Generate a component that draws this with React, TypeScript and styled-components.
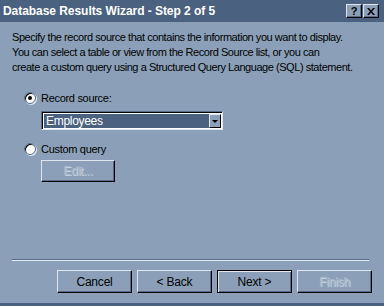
import styled, { createGlobalStyle, css } from 'styled-components';

const GlobalStyle = createGlobalStyle`
    html, body {
        margin: 0;
        padding: 0;
        background: #8ba0b8;
    }
    * {
        box-sizing: border-box;
    }
`;

const Window = styled.div`
    width: 384px;
    height: 306px;
    display: flex;
    flex-direction: column;
    background: #8ba0b8;
    border-bottom: 3px solid #4b6180;
    font-family: "Liberation Sans", Arial, sans-serif;
    font-size: 11px;
    color: #000;
`;

const TitleBar = styled.div`
    height: 22px;
    display: flex;
    align-items: center;
    justify-content: space-between;
    background: #4b6180;
    padding: 0 5px 0 3px;
`;

const Title = styled.span`
    color: #fff;
    font-weight: bold;
    font-size: 12px;
    letter-spacing: -0.05px;
`;

const Caps = styled.div`
    display: flex;
    gap: 1px;
`;

const CapButton = styled.div`
    width: 16px;
    height: 14px;
    display: flex;
    align-items: center;
    justify-content: center;
    background: #8ba0b8;
    border-top: 1px solid #dfe6ef;
    border-left: 1px solid #dfe6ef;
    border-right: 1px solid #000;
    border-bottom: 1px solid #000;
    box-shadow: inset -1px -1px 0 #566c88;
    font-weight: bold;
    font-size: 11px;
    line-height: 1;
`;

const Content = styled.div`
    flex: 1;
    padding: 8px 12px 0 12px;
`;

const Intro = styled.p`
    margin: 0;
    line-height: 15px;
    letter-spacing: -0.45px;
    white-space: nowrap;
`;

const Options = styled.div`
    margin-top: 15px;
    padding-left: 29px;
`;

const OptionRow = styled.label<{ $top?: number }>`
    display: flex;
    align-items: center;
    gap: 5px;
    height: 15px;
    margin-left: -17px;
    margin-top: ${p => p.$top ?? 0}px;
    letter-spacing: -0.3px;
`;

const Radio = styled.span<{ $checked?: boolean }>`
    width: 12px;
    height: 12px;
    border-radius: 50%;
    background: #fff;
    border: 1px solid #566c88;
    box-shadow: inset 1px 1px 0 #000, 1px 1px 0 #dfe6ef;
    display: flex;
    align-items: center;
    justify-content: center;
    &::after {
        content: '';
        width: 4px;
        height: 4px;
        border-radius: 50%;
        background: #000;
        display: ${p => (p.$checked ? 'block' : 'none')};
    }
`;

const Select = styled.div`
    margin-top: 6px;
    width: 182px;
    height: 19px;
    display: flex;
    border-top: 1px solid #566c88;
    border-left: 1px solid #566c88;
    border-right: 1px solid #dfe6ef;
    border-bottom: 1px solid #dfe6ef;
    box-shadow: inset 1px 1px 0 #000;
    padding: 2px 1px 1px 2px;
    background: #fff;
`;

const SelectValue = styled.div`
    flex: 1;
    background: #4b6180;
    color: #fff;
    padding-left: 2px;
    line-height: 14px;
    font-size: 12px;
    letter-spacing: -0.3px;
`;

const SelectArrow = styled.div`
    width: 12px;
    display: flex;
    align-items: center;
    justify-content: center;
    background: #8ba0b8;
    border-top: 1px solid #dfe6ef;
    border-left: 1px solid #dfe6ef;
    border-right: 1px solid #000;
    border-bottom: 1px solid #000;
    &::after {
        content: '';
        border-left: 3px solid transparent;
        border-right: 3px solid transparent;
        border-top: 3px solid #000;
    }
`;

const Button = styled.button<{ $default?: boolean }>`
    width: 75px;
    height: 23px;
    padding: 0;
    background: #8ba0b8;
    font-family: "Liberation Sans", Arial, sans-serif;
    font-size: 12px;
    letter-spacing: -0.2px;
    color: #000;
    border-top: 1px solid #dfe6ef;
    border-left: 1px solid #dfe6ef;
    border-right: 1px solid #000;
    border-bottom: 1px solid #000;
    box-shadow: inset -1px -1px 0 #566c88;
    ${p => p.$default && css`
        border: 1px solid #000;
        box-shadow: inset 1px 1px 0 #dfe6ef, inset -1px -1px 0 #566c88;
    `}
    &:disabled {
        color: #a9b9cc;
        text-shadow: 1px 1px 0 #c5d1df;
    }
`;

const EditButton = styled(Button)`
    margin-top: 4px;
    height: 22px;
    width: 74px;
`;

const Footer = styled.div`
    padding: 0 12px 10px 12px;
`;

const Separator = styled.div`
    margin-right: 3px;
    border-top: 1px solid #566c88;
    border-bottom: 1px solid #e6ecf3;
`;

const ButtonRow = styled.div`
    margin-top: 9px;
    display: flex;
    justify-content: flex-end;
    gap: 5px;
`;

function App() {
    return (
        <Window>
            <GlobalStyle />
            <TitleBar>
                <Title>Database Results Wizard - Step 2 of 5</Title>
                <Caps>
                    <CapButton>?</CapButton>
                    <CapButton>
                        <svg width="8" height="7" viewBox="0 0 8 7">
                            <path d="M0 0h2l2 2.5L6 0h2L5 3.5 8 7H6L4 4.5 2 7H0l3-3.5z" fill="#000" />
                        </svg>
                    </CapButton>
                </Caps>
            </TitleBar>
            <Content>
                <Intro>
                    Specify the record source that contains the information you want to display.<br />
                    You can select a table or view from the Record Source list, or you can<br />
                    create a custom query using a Structured Query Language (SQL) statement.
                </Intro>
                <Options>
                    <OptionRow>
                        <Radio $checked />
                        Record source:
                    </OptionRow>
                    <Select>
                        <SelectValue>Employees</SelectValue>
                        <SelectArrow />
                    </Select>
                    <OptionRow $top={11}>
                        <Radio />
                        Custom query
                    </OptionRow>
                    <EditButton disabled>Edit...</EditButton>
                </Options>
            </Content>
            <Footer>
                <Separator />
                <ButtonRow>
                    <Button>Cancel</Button>
                    <Button>&lt; Back</Button>
                    <Button $default>Next &gt;</Button>
                    <Button disabled>Finish</Button>
                </ButtonRow>
            </Footer>
        </Window>
    );
}

export default App;
